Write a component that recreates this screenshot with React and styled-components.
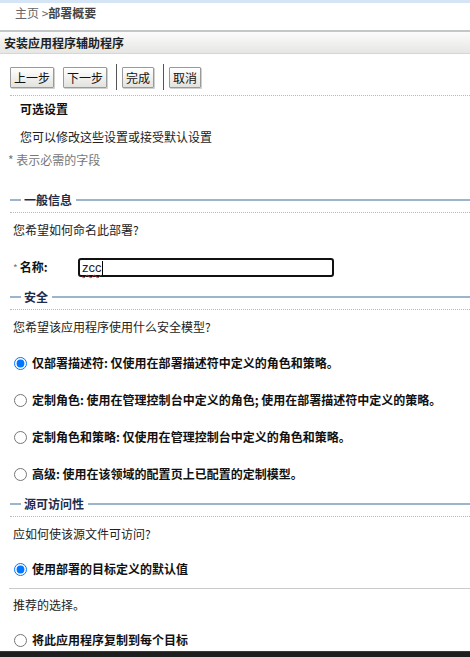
import React from "react";
import styled, { createGlobalStyle } from "styled-components";

const Global = createGlobalStyle`
  html, body { margin: 0; padding: 0; background: #fff; }
  body {
    font-family: "Noto Sans CJK SC", "Liberation Sans", sans-serif;
    font-size: 12px;
    line-height: 16px;
    color: #222;
    width: 470px;
    overflow: hidden;
  }
`;

const Page = styled.div`
  width: 470px;
  display: flex;
  flex-direction: column;
`;

const TopStrip = styled.div`
  height: 3px;
  background: #d5e5f5;
`;

const Breadcrumb = styled.div`
  height: 27px;
  box-sizing: border-box;
  padding: 2px 0 0 15px;
  color: #666;
  b { color: #444; font-weight: bold; }
`;

const HeaderBar = styled.div`
  border-top: 2px solid #c3c7c7;
  border-bottom: 1px solid #d6d7d4;
  height: 21px;
  line-height: 21px;
  padding-left: 4px;
  background: linear-gradient(#fbfbfb, #e6e7e4);
  font-weight: bold;
  color: #222;
`;

const Toolbar = styled.div`
  display: flex;
  align-items: center;
  margin-left: 10px;
  padding: 10px 0 5px;
  border-bottom: 1px dotted #b8b8b8;
`;

const Button = styled.button`
  height: 21px;
  padding: 0 3px;
  margin-right: 9px;
  border: 1px solid #9a9a9a;
  border-radius: 1px;
  background: linear-gradient(#ffffff, #e2e2de);
  font: inherit;
  color: #111;
  line-height: 17px;
  box-shadow: 1px 1px 0 #d0d0d0;
`;

const Sep = styled.span`
  width: 1px;
  height: 26px;
  background: #555;
  margin-right: 5px;
`;

const Title = styled.div`
  margin-top: 5px;
  padding-left: 20px;
  font-weight: bold;
  color: #111;
`;

const Text = styled.div`
  margin-top: ${(p) => p.$mt || 0}px;
  padding-left: ${(p) => (p.$pl != null ? p.$pl : 13)}px;
  color: ${(p) => (p.$muted ? "#777" : "#222")};
`;

const Legend = styled.div`
  margin-top: ${(p) => p.$mt}px;
  display: flex;
  align-items: center;
  height: 16px;
  padding-left: 10px;
  font-weight: bold;
  color: #1e2c4c;
  &::before, &::after {
    content: "";
    height: 2px;
    background: #9db4cd;
  }
  &::before { width: 11px; margin-right: 3px; }
  &::after { flex: 1; margin-left: 4px; }
`;

const Dotted = styled.div`
  margin: 4px 0 0 10px;
  border-top: 1px dotted #b8b8b8;
`;

const Solid = styled.div`
  margin: ${(p) => p.$mt}px 0 0 9px;
  border-top: 1px solid #cacaca;
`;

const FieldRow = styled.div`
  margin-top: 20px;
  display: flex;
  align-items: center;
  height: 19px;
  padding-left: 13px;
`;

const FieldLabel = styled.div`
  width: 65px;
  font-weight: bold;
  color: #111;
  span { color: #777; font-weight: normal; font-size: 10px; margin-right: 2px; }
`;

const FakeInput = styled.div`
  width: 250px;
  height: 15px;
  border: 2px solid #111;
  border-radius: 3px;
  padding-left: 2px;
  display: flex;
  align-items: center;
  font-family: "Liberation Sans", sans-serif;
  font-size: 13px;
  span {
    text-decoration: underline wavy #e02020;
    text-decoration-thickness: 1px;
    text-underline-offset: 2px;
    border-right: 1px solid #000;
    line-height: 14px;
  }
`;

const RadioRow = styled.label`
  margin-top: ${(p) => p.$mt}px;
  display: flex;
  align-items: center;
  height: 16px;
  padding-left: 14px;
  font-weight: bold;
  color: #111;
  input { margin: 0 5px 0 0; width: 13px; height: 13px; }
`;

const BottomBar = styled.div`
  margin-top: 3px;
  height: 6px;
  background: #1e1e1e;
  border-top: 1px solid #3a3a3a;
`;

const Radio = ({ mt, checked, name, children }) => (
  <RadioRow $mt={mt}>
    <input type="radio" name={name} defaultChecked={checked} />
    {children}
  </RadioRow>
);

export default function App() {
  return (
    <Page>
      <Global />
      <TopStrip />
      <Breadcrumb>主页 &gt;<b>部署概要</b></Breadcrumb>
      <HeaderBar>安装应用程序辅助程序</HeaderBar>
      <Toolbar>
        <Button>上一步</Button>
        <Button>下一步</Button>
        <Sep />
        <Button>完成</Button>
        <Sep />
        <Button>取消</Button>
      </Toolbar>
      <Title>可选设置</Title>
      <Text $mt={12} $pl={20}>您可以修改这些设置或接受默认设置</Text>
      <Text $mt={7} $pl={8} $muted>* 表示必需的字段</Text>

      <Legend $mt={24}>一般信息</Legend>
      <Dotted />
      <Text $mt={9}>您希望如何命名此部署?</Text>
      <FieldRow>
        <FieldLabel><span>*</span>名称:</FieldLabel>
        <FakeInput role="textbox"><span>zcc</span></FakeInput>
      </FieldRow>

      <Legend $mt={12}>安全</Legend>
      <Dotted />
      <Text $mt={9}>您希望该应用程序使用什么安全模型?</Text>
      <Radio mt={20} name="sec" checked>仅部署描述符: 仅使用在部署描述符中定义的角色和策略。</Radio>
      <Radio mt={21} name="sec">定制角色: 使用在管理控制台中定义的角色; 使用在部署描述符中定义的策略。</Radio>
      <Radio mt={21} name="sec">定制角色和策略: 仅使用在管理控制台中定义的角色和策略。</Radio>
      <Radio mt={21} name="sec">高级: 使用在该领域的配置页上已配置的定制模型。</Radio>

      <Legend $mt={14}>源可访问性</Legend>
      <Dotted />
      <Text $mt={9}>应如何使该源文件可访问?</Text>
      <Radio mt={19} name="src" checked>使用部署的目标定义的默认值</Radio>
      <Solid $mt={11} />
      <Text $mt={8}>推荐的选择。</Text>
      <Radio mt={19} name="src">将此应用程序复制到每个目标</Radio>
      <BottomBar />
    </Page>
  );
}
